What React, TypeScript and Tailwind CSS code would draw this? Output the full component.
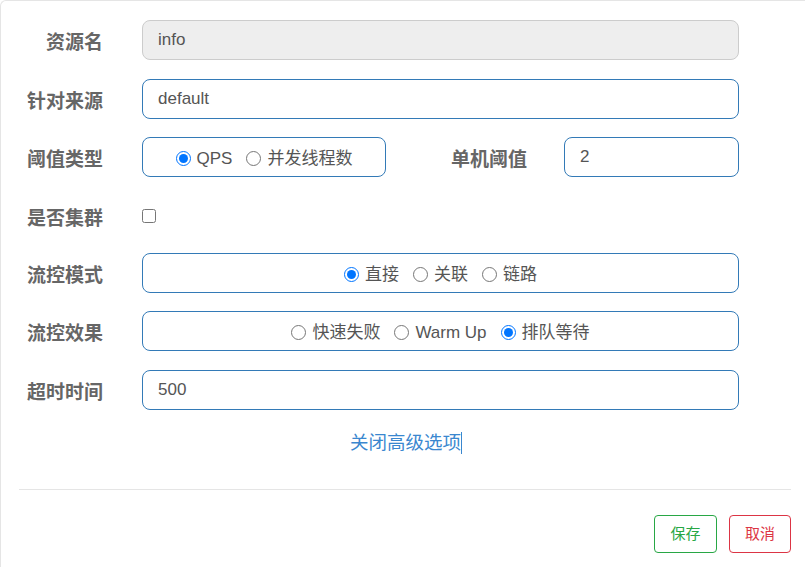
import { useState } from 'react';

const font = { fontFamily: '"Liberation Sans", "Noto Sans CJK SC", sans-serif' };

function Radio({ name, label, checked, onChange }: { name: string; label: string; checked: boolean; onChange: () => void }) {
  return (
    <label className="flex items-center gap-[6px] cursor-pointer">
      <input type="radio" name={name} checked={checked} onChange={onChange} className="w-[15px] h-[15px] m-0 accent-[#0075ff]" />
      <span>{label}</span>
    </label>
  );
}

function RadioBox({ name, options, value, onChange, className }: { name: string; options: string[]; value: string; onChange: (v: string) => void; className: string }) {
  return (
    <div className={`h-[40px] pt-[3px] flex items-center justify-center gap-[14px] border border-[#337ab7] rounded-[8px] text-[17px] text-[#555] ${className}`}>
      {options.map((o) => (
        <Radio key={o} name={name} label={o} checked={value === o} onChange={() => onChange(o)} />
      ))}
    </div>
  );
}

function Label({ children, className = 'w-[102px]' }: { children: string; className?: string }) {
  return <div className={`shrink-0 pt-[4px] text-right font-bold text-[19px] text-[#666] leading-none ${className}`}>{children}</div>;
}

export default function App() {
  const [grade, setGrade] = useState('QPS');
  const [strategy, setStrategy] = useState('直接');
  const [behavior, setBehavior] = useState('排队等待');

  const inputCls = 'h-[40px] border rounded-[8px] px-[15px] text-[17px] text-[#555] outline-none';
  const editCls = `${inputCls} border-[#337ab7] bg-white`;

  return (
    <div className="w-[805px] h-[567px] bg-white overflow-hidden" style={font}>
      <div className="h-full border-t border-l border-[#e5e5e5] rounded-tl-[6px] flex flex-col">
        <div className="pt-[19px] flex flex-col">
          <div className="flex items-center gap-[39px]">
            <Label>资源名</Label>
            <input disabled value="info" className={`${inputCls} w-[597px] bg-[#eeeeee] border-[#cccccc]`} />
          </div>
          <div className="flex items-center gap-[39px] mt-[19px]">
            <Label>针对来源</Label>
            <input defaultValue="default" className={`${editCls} w-[597px]`} />
          </div>
          <div className="flex items-center gap-[39px] mt-[18px]">
            <Label>阈值类型</Label>
            <RadioBox name="grade" options={['QPS', '并发线程数']} value={grade} onChange={setGrade} className="w-[244px]" />
            <Label className="w-[102px]">单机阈值</Label>
            <input defaultValue="2" className={`${editCls} w-[175px] -ml-[2px]`} />
          </div>
          <div className="flex items-center gap-[39px] mt-[19px] h-[40px]">
            <Label>是否集群</Label>
            <input type="checkbox" className="w-[14px] h-[14px] m-0" />
          </div>
          <div className="flex items-center gap-[39px] mt-[17px]">
            <Label>流控模式</Label>
            <RadioBox name="strategy" options={['直接', '关联', '链路']} value={strategy} onChange={setStrategy} className="w-[597px]" />
          </div>
          <div className="flex items-center gap-[39px] mt-[18px]">
            <Label>流控效果</Label>
            <RadioBox name="behavior" options={['快速失败', 'Warm Up', '排队等待']} value={behavior} onChange={setBehavior} className="w-[597px]" />
          </div>
          <div className="flex items-center gap-[39px] mt-[19px]">
            <Label>超时时间</Label>
            <input defaultValue="500" className={`${editCls} w-[597px]`} />
          </div>
          <div className="flex justify-center mt-[22px]">
            <span className="text-[18.5px] text-[#3a87cf] leading-[22px] ml-[6px]">
              关闭高级选项<span className="inline-block w-px h-[22px] bg-[#3a87cf] align-top" />
            </span>
          </div>
        </div>
        <div className="mt-[35px] ml-[18px] mr-[14px] border-t border-[#e5e5e5]" />
        <div className="flex justify-end gap-[12px] pr-[14px] mt-[25px]">
          <button className="w-[63px] h-[38px] border border-[#28a745] text-[#28a745] rounded-[4px] text-[15px] bg-white">保存</button>
          <button className="w-[62px] h-[38px] border border-[#dc3545] text-[#dc3545] rounded-[4px] text-[15px] bg-white">取消</button>
        </div>
      </div>
    </div>
  );
}
